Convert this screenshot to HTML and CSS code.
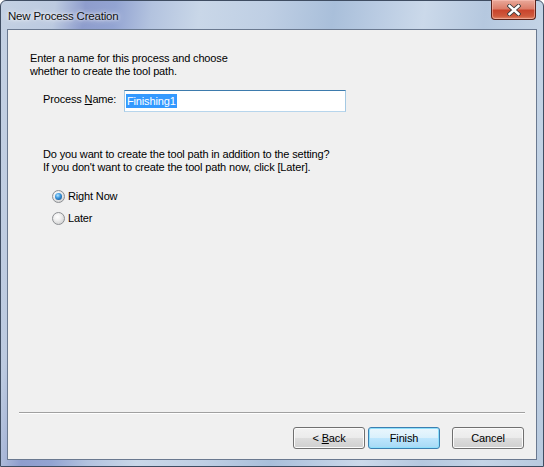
FILE: index.html
```html
<!DOCTYPE html>
<html>
<head>
<meta charset="utf-8">
<link rel="stylesheet" href="styles.css">
</head>
<body>
<div class="window">
  <div class="titlebar">
    <span class="title">New Process Creation</span>
    <span class="close">
      <svg width="14" height="12" viewBox="0 0 14 12">
        <path d="M2.5 2 L11.5 10 M11.5 2 L2.5 10" stroke="#3b3b3b" stroke-width="4.2" stroke-linecap="square"/>
        <path d="M2.5 2 L11.5 10 M11.5 2 L2.5 10" stroke="#ffffff" stroke-width="2.4" stroke-linecap="square"/>
      </svg>
    </span>
  </div>
  <div class="client">
    <div class="content">
      <p class="intro">Enter a name for this process and choose<br>whether to create the tool path.</p>
      <div class="name-row">
        <span class="label">Process <u>N</u>ame:</span>
        <div class="input"><span class="sel">Finishing1</span></div>
      </div>
      <p class="question">Do you want to create the tool path in addition to the setting?<br>If you don't want to create the tool path now, click [Later].</p>
      <div class="radios">
        <div class="radio-row"><span class="radio checked"></span><span>Right Now</span></div>
        <div class="radio-row"><span class="radio"></span><span>Later</span></div>
      </div>
    </div>
    <div class="footer">
      <div class="sep"></div>
      <div class="buttons">
        <span class="btn"><span>&lt; <u>B</u>ack</span></span>
        <span class="btn default"><span>Finish</span></span>
        <span class="btn cancel"><span>Cancel</span></span>
      </div>
    </div>
  </div>
</div>
</body>
</html>
```
FILE: styles.css
```css
html, body {
  margin: 0;
  padding: 0;
  background: #ffffff;
}
.window {
  width: 544px;
  height: 467px;
  box-sizing: border-box;
  border: 1px solid #3f4d62;
  border-radius: 6px 6px 0 0;
  padding: 0 6px 6px 6px;
  display: flex;
  flex-direction: column;
  background:
    linear-gradient(98deg, #c4d1e3 0%, #bccae0 9%, #8e9dcd 14%, #93a4d2 19%, #b3c3df 25%, #c9d7e8 33%, #bfcfe4 44%, #a9bfda 55%, #b9cbe2 62%, #cbd9ea 70%, #b5c8df 80%, #c4d4e6 90%, #b8cadf 100%);
  font-family: "Liberation Sans", Arial, sans-serif;
  font-size: 11px;
  letter-spacing: -0.15px;
  color: #000;
}
.titlebar {
  height: 28px;
  display: flex;
  align-items: flex-start;
}
.title {
  font-family: "Liberation Sans", Arial, sans-serif;
  font-size: 11.5px;
  letter-spacing: -0.2px;
  line-height: 14px;
  padding: 8px 0 0 1px;
  color: #111;
  text-shadow: 0 0 6px rgba(255,255,255,0.9), 0 0 3px rgba(255,255,255,0.9);
}
.close {
  margin-left: auto;
  margin-right: 1px;
  margin-top: -1px;
  width: 45px;
  height: 20px;
  box-sizing: border-box;
  border: 1px solid #5b231b;
  border-top: none;
  border-radius: 0 0 4px 4px;
  background: linear-gradient(#e9a99a 0%, #dc7e6a 45%, #c9452d 55%, #cf5a3d 85%, #e08a6c 100%);
  box-shadow: inset 0 0 0 1px rgba(255,200,190,0.5);
  display: flex;
  align-items: center;
  justify-content: center;
}
.client {
  flex: 1;
  border: 1px solid #6a7990;
  background: #f0f0f0;
  display: flex;
  flex-direction: column;
}
.content {
  padding: 22px 0 0 22px;
}
p {
  margin: 0;
  line-height: 13px;
}
.name-row {
  display: flex;
  align-items: flex-start;
  margin: 12px 0 0 13px;
}
.label {
  width: 81px;
  padding-top: 3px;
  line-height: 13px;
}
.input {
  width: 222px;
  height: 22px;
  box-sizing: border-box;
  background: #fff;
  border: 1px solid;
  border-color: #3d7bad #a4c9e3 #b7d5ec #a4c9e3;
  padding: 3px 0 0 1px;
  line-height: 14px;
}
.sel {
  background: #3399ff;
  color: #fff;
  padding: 1px;
}
.question {
  margin: 36px 0 0 13px;
}
.radios {
  margin: 14px 0 0 22px;
  display: flex;
  flex-direction: column;
  gap: 6px;
}
.radio-row {
  height: 16px;
  display: flex;
  align-items: center;
  gap: 3px;
  line-height: 13px;
}
.radio {
  width: 13px;
  height: 13px;
  box-sizing: border-box;
  border-radius: 50%;
  border: 1px solid #8c8f93;
  background: radial-gradient(circle at 40% 35%, #ffffff 0%, #f0f0f0 35%, #d6d6d6 75%, #e8e8e8 100%);
  display: flex;
  align-items: center;
  justify-content: center;
}
.radio.checked::after {
  content: "";
  width: 7px;
  height: 7px;
  border-radius: 50%;
  background: radial-gradient(circle at 40% 35%, #b6e6ff 0%, #3f9ae0 40%, #1a5c9c 80%, #124a80 100%);
}
.footer {
  margin-top: auto;
}
.sep {
  margin: 0 11px;
  border-top: 1px solid #a0a0a0;
  border-bottom: 1px solid #ffffff;
}
.buttons {
  display: flex;
  justify-content: flex-end;
  gap: 3px;
  padding: 13px 12px 10px 0;
}
.btn {
  width: 72px;
  height: 22px;
  box-sizing: border-box;
  border: 1px solid #707070;
  border-radius: 3px;
  background: linear-gradient(#f2f2f2 0%, #ebebeb 50%, #dddddd 50%, #cfcfcf 100%);
  box-shadow: inset 0 0 0 1px #fbfbfb;
  display: flex;
  align-items: center;
  justify-content: center;
  line-height: 13px;
}
.btn.default {
  border-color: #3c7fb1;
  background: linear-gradient(#eaf6fd 0%, #d9f0fc 50%, #bee6fd 50%, #a7d9f5 100%);
  box-shadow: inset 0 0 0 1px #8fe0fb;
}
.btn.cancel {
  margin-left: 9px;
}
u {
  text-decoration: underline;
  text-underline-offset: 1px;
}
```
